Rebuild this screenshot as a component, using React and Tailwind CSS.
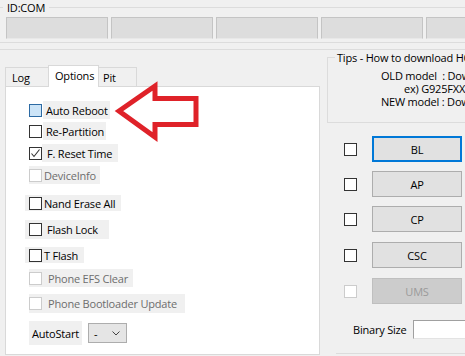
import React from 'react';

const CheckBox = ({ state = 'normal' }) => {
  const styles = {
    normal: 'border-[#333333] bg-white',
    hover: 'border-[#2c6aa3] bg-[#cce4f7]',
    checked: 'border-[#333333] bg-white',
    disabled: 'border-[#cccccc] bg-white',
  };

  return (
    <span className={`flex items-center justify-center w-[13px] h-[13px] shrink-0 border ${styles[state]}`}>
      {state === 'checked' && (
        <svg width="11" height="11" viewBox="0 0 11 11">
          <polyline points="1.5,5.5 4,8.5 9.5,1.5" fill="none" stroke="#333333" strokeWidth="1.1" />
        </svg>
      )}
    </span>
  );
};

const Option = ({ label, box = 'normal', className = '', labelClass = '' }) => (
  <div className={`flex items-center w-fit ${className}`}>
    <CheckBox state={box} />
    <span className={`whitespace-nowrap ${box === 'disabled' ? 'text-[#6d6d6d]' : 'text-black'} ${labelClass}`}>
      {label}
    </span>
  </div>
);

const FileButton = ({ label, focused = false, disabled = false, className = '' }) => {
  let btn = 'bg-[#e1e1e1] border border-[#adadad] text-black';
  if (focused) btn = 'bg-[#e1e1e1] border-2 border-[#0078d7] text-black';
  if (disabled) btn = 'bg-[#cccccc] border border-[#bfbfbf] text-[#9a9a9a]';

  return (
    <div className={`flex items-center h-[26px] ${className}`}>
      <div className="ml-[24px]">
        <CheckBox state={disabled ? 'disabled' : 'normal'} />
      </div>
      <div className={`ml-[15px] w-[90px] h-[26px] flex items-center justify-center ${btn}`}>{label}</div>
    </div>
  );
};

const App = () => {
  return (
    <div className="relative w-[465px] h-[356px] overflow-hidden bg-[#f0f0f0] text-black font-['Open_Sans',sans-serif] text-[11px] tracking-[-0.2px] leading-none select-none">
      {/* ID:COM group */}
      <div className="relative mt-[7px] border-t border-b border-[#dcdcdc] pt-[9px] pb-[3px]">
        <span className="absolute left-[3px] -top-[7px] px-[4px] bg-[#f0f0f0] leading-[13px]">ID:COM</span>
        <div className="flex gap-[3px] pl-[6px]">
          {[0, 1, 2, 3, 4].map((i) => (
            <div key={i} className="w-[102px] h-[22px] shrink-0 bg-[#dddddd] border border-[#c4c4c4] border-b-[#e8e8e8]"></div>
          ))}
        </div>
      </div>
      <div className="mt-[6px] border-t border-[#dcdcdc]"></div>

      <div className="flex h-[305px]">
        {/* Tab control */}
        <div className="w-[320px] shrink-0 pl-[5px] pt-[15px] flex flex-col">
          <div className="flex items-end h-[21px]">
            <div className="w-[43px] h-[19px] border-t border-l border-[#d9d9d9] bg-[#f0f0f0] pl-[6px] flex items-center">Log</div>
            <div className="relative z-10 w-[51px] h-[22px] -mb-px border-t border-l border-r border-[#d9d9d9] bg-white pl-[6px] pb-[3px] flex items-center">Options</div>
            <div className="w-[38px] h-[19px] border-t border-r border-[#d9d9d9] bg-[#f0f0f0] pl-[4px] flex items-center">Pit</div>
          </div>
          <div className="flex-1 border border-[#d9d9d9] bg-white">
            <Option
              label="Auto Reboot"
              box="hover"
              className="mt-[14px] ml-[23px] h-[18px]"
              labelClass="ml-[1px] h-[18px] pl-[3px] pr-[2px] flex items-center bg-[#f0f0f0]"
            />
            <Option
              label="Re-Partition"
              className="mt-[3px] ml-[23px] h-[18px]"
              labelClass="ml-[1px] h-[18px] pl-[3px] pr-[2px] flex items-center bg-[#f0f0f0]"
            />
            <Option
              label="F. Reset Time"
              box="checked"
              className="mt-[4px] ml-[23px] h-[18px]"
              labelClass="h-[18px] pl-[5px] pr-[6px] flex items-center bg-[#f0f0f0]"
            />
            <Option
              label="DeviceInfo"
              box="disabled"
              className="mt-[4px] ml-[23px] h-[18px] bg-[#f0f0f0] pr-[4px]"
              labelClass="ml-[2px]"
            />
            <Option
              label="Nand Erase All"
              className="mt-[11px] ml-[19px] h-[16px] bg-[#f0f0f0] pl-[4px] pr-[6px]"
              labelClass="ml-[2px]"
            />
            <Option
              label="Flash Lock"
              className="mt-[9px] ml-[19px] h-[19px] bg-[#f0f0f0] pl-[4px] pr-[11px]"
              labelClass="ml-[5px]"
            />
            <Option
              label="T Flash"
              className="mt-[8px] ml-[19px] h-[16px] bg-[#f0f0f0] pl-[4px] pr-[6px]"
              labelClass="ml-[2px]"
            />
            <Option
              label="Phone EFS Clear"
              box="disabled"
              className="mt-[6px] ml-[23px] h-[18px] bg-[#f0f0f0] pr-[5px]"
              labelClass="ml-[6px]"
            />
            <Option
              label="Phone Bootloader Update"
              box="disabled"
              className="mt-[7px] ml-[23px] h-[19px] bg-[#f0f0f0] pr-[8px]"
              labelClass="ml-[6px]"
            />
            <div className="mt-[8px] ml-[23px] flex items-center">
              <span className="h-[24px] px-[3px] flex items-center bg-[#f0f0f0]">AutoStart</span>
              <div className="ml-[6px] w-[39px] h-[20px] bg-[#e5e5e5] border border-[#adadad] flex items-center justify-between pl-[5px] pr-[6px]">
                <span>-</span>
                <svg width="8" height="5" viewBox="0 0 8 5">
                  <polyline points="0.5,0.5 4,4 7.5,0.5" fill="none" stroke="#444444" strokeWidth="1" />
                </svg>
              </div>
            </div>
          </div>
        </div>

        {/* Right side */}
        <div className="w-[145px] shrink-0 overflow-hidden">
          <div className="relative mt-[7px] ml-[7px] h-[66px] border-t border-l border-b border-[#dcdcdc] pt-[11px] whitespace-nowrap leading-[13px]">
            <span className="absolute left-[7px] -top-[7px] px-[2px] bg-[#f0f0f0]">Tips - How to download HOME binary</span>
            <div className="ml-[53px]">OLD model&nbsp; : Download one binary&nbsp;&nbsp; "(FILE_NAME).tar.md5"</div>
            <div className="ml-[76px]">ex) G925FXXU1AOE3_CL4807125_REV00.tar.md5</div>
            <div className="ml-[53px]">NEW model : Download BL + AP + CP + HOME_CSC</div>
          </div>

          <FileButton label="BL" focused className="mt-[13px]" />
          <FileButton label="AP" className="mt-[9px]" />
          <FileButton label="CP" className="mt-[9px]" />
          <FileButton label="CSC" className="mt-[10px]" />
          <FileButton label="UMS" disabled className="mt-[10px]" />

          <div className="mt-[16px] flex items-center h-[19px]">
            <span className="ml-[33px] whitespace-nowrap">Binary Size</span>
            <div className="ml-[6px] w-[60px] h-[19px] shrink-0 bg-white border border-[#a0a0a0] border-b-[#e3e3e3] border-r-[#e3e3e3]"></div>
          </div>
          <div className="mt-[14px] ml-[16px] border-t border-[#dcdcdc]"></div>
        </div>
      </div>

      {/* red annotation arrow */}
      <svg className="absolute left-0 top-0 pointer-events-none" width="465" height="356" viewBox="0 0 465 356">
        <polygon
          points="119,111 155,86 155,98.5 196,98.5 196,124.5 155,124.5 155,137"
          fill="none"
          stroke="#df2229"
          strokeWidth="5"
          strokeLinejoin="miter"
        />
      </svg>
    </div>
  );
};

export default App;
